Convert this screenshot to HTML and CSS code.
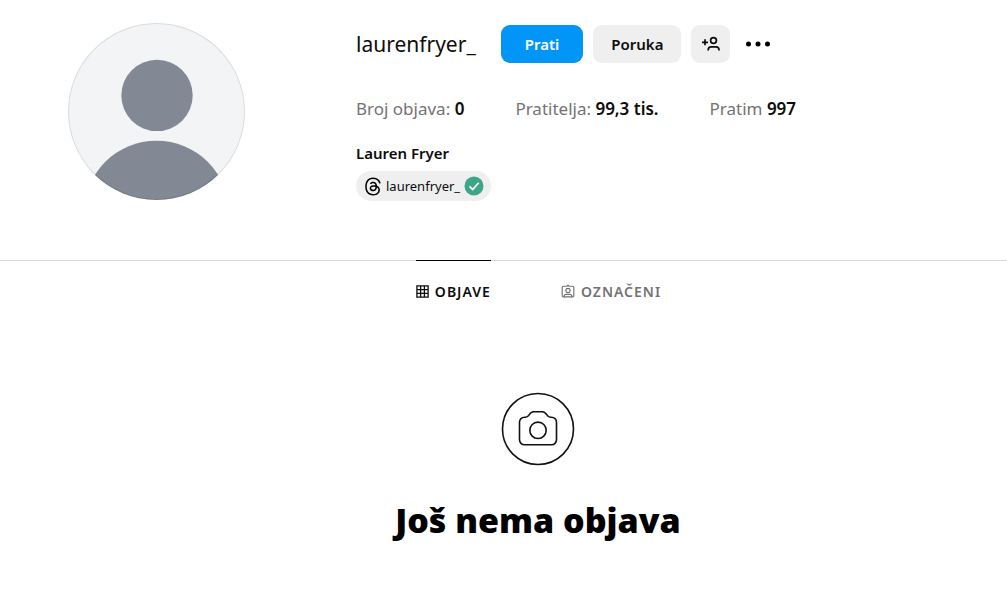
FILE: index.html
```
<!DOCTYPE html>
<html lang="hr">
<head>
<meta charset="utf-8">
<meta name="viewport" content="width=device-width, initial-scale=1">
<title>laurenfryer_</title>
<link rel="stylesheet" href="styles.css">
</head>
<body>
<main class="page">
  <header class="profile">
    <svg class="avatar" viewBox="0 0 176 176" role="img" aria-label="Lauren Fryer">
      <defs><clipPath id="round"><circle cx="88" cy="88" r="88"/></clipPath></defs>
      <g clip-path="url(#round)">
        <rect width="176" height="176" fill="#f2f4f6"/>
        <circle cx="88.500" cy="72" r="35.500" fill="#828994"/>
        <circle cx="88" cy="189" r="72" fill="#828994"/>
      </g>
      <circle cx="88" cy="88" r="87.500" fill="none" stroke="#000" stroke-opacity=".1"/>
    </svg>
    <section class="info">
      <div class="title-row">
        <h1 class="username">laurenfryer_</h1>
        <div class="actions">
          <button class="btn btn-primary" type="button">Prati</button>
          <button class="btn btn-message" type="button">Poruka</button>
          <button class="btn btn-icon" type="button" aria-label="Slični računi">
            <svg width="20" height="16" viewBox="0 0 20 16" fill="none" stroke="#0c0c0c" stroke-width="1.700">
              <circle cx="12.500" cy="4.500" r="2.900"/>
              <path d="M7.200 14.600v-.8a3 3 0 0 1 3-3h4.800a3 3 0 0 1 3 3v.8M1 6.300h6M4 3.300v6"/>
            </svg>
          </button>
          <button class="more" type="button" aria-label="Mogućnosti">
            <svg width="26" height="6" viewBox="0 0 26 6"><circle cx="3.500" cy="3" r="2.500"/><circle cx="13" cy="3" r="2.500"/><circle cx="22.500" cy="3" r="2.500"/></svg>
          </button>
        </div>
      </div>
      <ul class="stats">
        <li>Broj objava: <b>0</b></li>
        <li>Pratitelja: <b>99,3 tis.</b></li>
        <li>Pratim <b>997</b></li>
      </ul>
      <p class="name">Lauren Fryer</p>
      <a class="threads" href="#threads">
        <svg width="18" height="19" viewBox="0 0 192 192"><path d="M141.537 88.9883C140.71 88.5919 139.87 88.2104 139.019 87.8451C137.537 60.5382 122.616 44.905 97.5619 44.745C97.4484 44.7443 97.3355 44.7443 97.222 44.7443C82.2364 44.7443 69.7731 51.1409 62.102 62.7807L75.881 72.2328C81.6116 63.5383 90.6052 61.6848 97.2286 61.6848C97.3051 61.6848 97.3819 61.6848 97.4576 61.6855C105.707 61.7381 111.932 64.1366 115.961 68.814C118.893 72.2193 120.854 76.925 121.825 82.8638C114.511 81.6207 106.601 81.2385 98.145 81.7233C74.3247 83.0954 59.0111 96.9879 60.0396 116.292C60.5615 126.084 65.4397 134.508 73.775 140.011C80.8224 144.663 89.899 146.938 99.3323 146.423C111.79 145.74 121.563 140.987 128.381 132.296C133.559 125.696 136.834 117.143 138.28 106.366C144.217 109.949 148.617 114.664 151.047 120.332C155.179 129.967 155.42 145.8 142.501 158.708C131.182 170.016 117.576 174.908 97.0135 175.059C74.2042 174.89 56.9538 167.575 45.7381 153.317C35.2355 139.966 29.8077 120.682 29.6052 96C29.8077 71.3178 35.2355 52.0336 45.7381 38.6827C56.9538 24.4249 74.2039 17.11 97.0132 16.9405C119.988 17.1113 137.539 24.4614 149.184 38.788C154.894 45.8136 159.199 54.6488 162.037 64.9503L178.184 60.6422C174.744 47.9622 169.331 37.0357 161.965 27.974C147.036 9.60668 125.202 0.195148 97.0695 0H96.9569C68.8816 0.19447 47.2921 9.6418 32.7883 28.0793C19.8819 44.4864 13.2244 67.3157 13.0007 95.9325L13 96L13.0007 96.0675C13.2244 124.684 19.8819 147.514 32.7883 163.921C47.2921 182.358 68.8816 191.806 96.9569 192H97.0695C122.03 191.827 139.624 185.292 154.118 170.811C173.081 151.866 172.51 128.119 166.26 113.541C161.776 103.087 153.227 94.5962 141.537 88.9883ZM98.4405 129.507C88.0005 130.095 77.1544 125.409 76.6196 115.372C76.2232 107.93 81.9158 99.626 99.0812 98.6368C101.047 98.5234 102.976 98.468 104.871 98.468C111.106 98.468 116.939 99.0737 122.242 100.233C120.264 124.935 108.662 128.946 98.4405 129.507Z"/></svg>
        <span>laurenfryer_</span>
        <svg width="20" height="20" viewBox="0 0 20 20"><circle cx="10" cy="10" r="9.500" fill="#3fa588"/><path d="M5.500 10.300l3.200 3.200 6-6.800" fill="none" stroke="#fff" stroke-width="1.700"/></svg>
      </a>
    </section>
  </header>

  <nav class="tabs">
    <a class="tab tab-active" href="#objave">
      <svg width="13" height="13" viewBox="0 0 13 13" fill="none" stroke="currentColor" stroke-width="1.300"><path d="M.9.900h11.200v11.200H.9zM4.600.900v11.200M8.400.900v11.200M.9 4.600h11.200M.9 8.400h11.200"/></svg>
      OBJAVE
    </a>
    <a class="tab" href="#oznaceni">
      <svg width="14" height="14" viewBox="0 0 24 24" fill="none" stroke="currentColor" stroke-width="2" stroke-linecap="round" stroke-linejoin="round"><path d="M10.200 3.800L12 2l1.800 1.800h6.100A2.100 2.100 0 0 1 22 5.900v14a2.100 2.100 0 0 1-2.100 2.100H4.100A2.100 2.100 0 0 1 2 19.900v-14a2.100 2.100 0 0 1 2.100-2.100z"/><path d="M18.600 22a3.300 3.300 0 0 0-3.300-4.200H8.700A3.300 3.300 0 0 0 5.400 22"/><circle cx="12" cy="11.100" r="3.600"/></svg>
      OZNAČENI
    </a>
  </nav>

  <section class="empty">
    <svg width="74" height="74" viewBox="0 0 74 74" fill="none" stroke="#111" stroke-width="1.600">
      <circle cx="37" cy="37" r="35.500"/>
      <circle cx="37" cy="38.300" r="8.200"/>
      <path d="M50.500 52.800a5 5 0 0 0 5-5V30.200a5 5 0 0 0-5-5h-1.200c-1.700 0-2.400-.7-3.400-2.300-1.200-2-2.200-3.200-4.400-3.200h-9c-2.200 0-3.200 1.200-4.400 3.200-1 1.600-1.700 2.300-3.400 2.300h-1.200a5 5 0 0 0-5 5v17.600a5 5 0 0 0 5 5z" stroke-linejoin="round"/>
    </svg>
    <h2 class="empty-title">Još nema objava</h2>
  </section>
</main>
</body>
</html>
```
FILE: styles.css
```
* {
  box-sizing: border-box;
}

body {
  margin: 0;
  background: #fff;
  color: #0c0c0c;
  font-family: "Noto Sans", "Open Sans", sans-serif;
}

h1, h2, p, ul {
  margin: 0;
  padding: 0;
}

a {
  color: inherit;
  text-decoration: none;
}

svg {
  display: block;
  flex: none;
}

.profile {
  display: flex;
  gap: 111px;
  padding: 23px 24px 59px 68px;
}

.avatar {
  width: 177px;
  height: 177px;
}

.info {
  padding-top: 2px;
}

.title-row {
  display: flex;
  align-items: center;
  gap: 25px;
}

.username {
  font-size: 21px;
  line-height: 38px;
  font-weight: 400;
}

.actions {
  display: flex;
  align-items: center;
  gap: 10px;
}

.btn {
  display: flex;
  align-items: center;
  justify-content: center;
  height: 38px;
  padding: 0 18px;
  border: 0;
  border-radius: 9px;
  background: #efefef;
  color: #0c0c0c;
  font: 600 15px/24px "Noto Sans", "Open Sans", sans-serif;
}

.btn-primary {
  padding: 0 24px;
  background: #0095f6;
  color: #fff;
}

.btn-icon {
  width: 39px;
  padding: 0;
}

.more {
  padding: 8px 5px;
  border: 0;
  background: none;
}

.stats {
  display: flex;
  gap: 51px;
  margin-top: 32px;
  list-style: none;
  color: #737373;
  font-size: 17px;
  line-height: 28px;
}

.stats b {
  color: #0c0c0c;
  font-weight: 600;
}

.name {
  margin-top: 19px;
  font-size: 15px;
  line-height: 22px;
  font-weight: 600;
}

.threads {
  display: inline-flex;
  align-items: center;
  gap: 4px;
  height: 30px;
  margin-top: 7px;
  padding: 0 7px 0 8px;
  border-radius: 15px;
  background: #efefef;
  font-size: 13px;
  line-height: 20px;
}

.tabs {
  display: flex;
  justify-content: center;
  gap: 70px;
  padding-left: 70px;
  border-top: 1px solid #dbdbdb;
  font-size: 14px;
  font-weight: 600;
  letter-spacing: 1px;
}

.tab {
  display: flex;
  align-items: center;
  gap: 6px;
  height: 61px;
  margin-top: -1px;
  border-top: 1px solid transparent;
  color: #737373;
}

.tab-active {
  border-top-color: #000;
  color: #0c0c0c;
}

.empty {
  display: flex;
  flex-direction: column;
  align-items: center;
  gap: 30px;
  padding: 71px 0 48px 69px;
}

.empty-title {
  color: #000;
  font-size: 34px;
  line-height: 48px;
  font-weight: 900;
}
```
